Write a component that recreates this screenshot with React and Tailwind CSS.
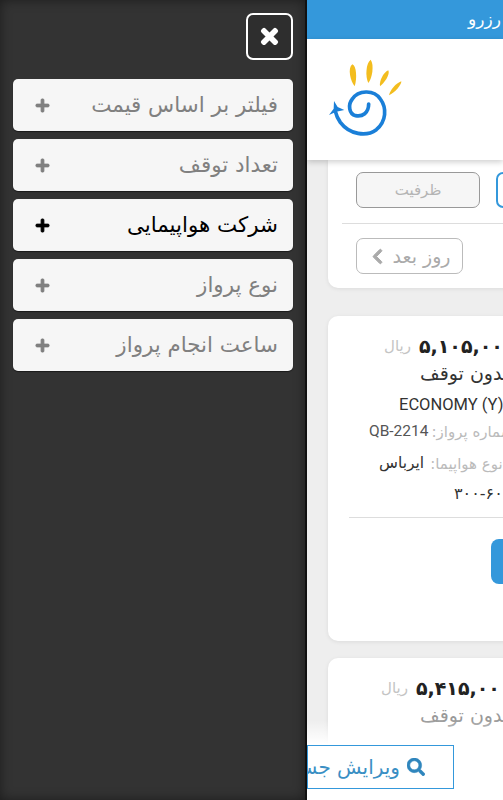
import React from "react";
import { FaTimes, FaPlus, FaSearch, FaChevronLeft } from "react-icons/fa";

const FILTERS = [
  ["فیلتر بر اساس قیمت", false],
  ["تعداد توقف", false],
  ["شرکت هواپیمایی", true],
  ["نوع پرواز", false],
  ["ساعت انجام پرواز", false],
];

const FONT = "font-['DejaVu_Sans','Noto_Sans',sans-serif]";

function Logo() {
  return (
    <svg viewBox="75 175 225 240" width="75" height="80" className="block">
      <g fill="#f3bd1e">
        <path d="M148 194C160 198 163 235 155 260C142 245 133 205 148 194Z" />
        <path d="M203 180C214 195 208 235 196 250C186 230 189 190 203 180Z" />
        <path d="M256 212C262 225 244 250 231 260C228 245 241 218 256 212Z" />
        <path d="M295 245C296 255 275 280 258 287C261 272 279 250 295 245Z" />
      </g>
      <path
        d="M197 313C197 340 178 352 158 348C138 343 134 315 148 298C165 272 212 268 232 298C252 325 250 365 220 390C190 412 140 405 112 368C105 358 100 348 97 335"
        fill="none"
        stroke="#1a7fd8"
        strokeWidth="11"
        strokeLinecap="round"
      />
      <path d="M78 346L92 327L93 304L104 322L124 331L100 336Z" fill="#1a7fd8" />
    </svg>
  );
}

function Card({ price, left, faded, tall }) {
  return (
    <div className={`w-[220px] rounded-l-[10px] bg-white shadow-[0_1px_4px_rgba(0,0,0,0.08)] ${tall ? "h-[325px]" : "h-[120px]"}`}>
      <div className="flex items-center pt-[16px]" style={{ paddingLeft: left }}>
        <span dir="rtl" className="text-[15px] leading-[28px] text-[#c4c4c4]">ریال</span>
        <span className="ml-[8px] whitespace-nowrap text-[19px] leading-[28px] font-bold tracking-[-0.6px] text-[#222]">۵,{price},۰۰۰</span>
      </div>
      <div className={`ml-[92px] h-[26px] whitespace-nowrap text-[19px] leading-[26px] ${faded ? "text-[#999]" : "text-[#333]"}`}>
        <span dir="rtl" className="inline-block">بدون توقف</span>
      </div>
      {tall && (
        <>
          <div className="ml-[71px] mt-[7px] whitespace-nowrap font-['Roboto',sans-serif] text-[16.5px] leading-[24px] text-[#333]">ECONOMY (Y)</div>
          <div className="ml-[41px] mt-[3px] flex h-[24px] items-center whitespace-nowrap">
            <span className="font-['Roboto',sans-serif] text-[15.5px] text-[#555]">QB-2214</span>
            <span dir="rtl" className="ml-[3px] text-[15px] text-[#bbb]">شماره پرواز:</span>
          </div>
          <div className="ml-[51px] mt-[8px] flex h-[24px] items-center whitespace-nowrap">
            <span dir="rtl" className="text-[15.5px] text-[#333]">ایرباس</span>
            <span dir="rtl" className="ml-[6px] text-[15px] text-[#bbb]">نوع هواپیما:</span>
          </div>
          <div className="ml-[126px] mt-[8px] whitespace-nowrap text-[16px] leading-[20px] text-[#333]">۳۰۰-۶۰۰</div>
          <div className="ml-[21px] mt-[13px] h-px bg-[#ddd]" />
          <div className="ml-[163px] mt-[21px] h-[45px] w-[60px] rounded-[8px] bg-[#3498db]" />
        </>
      )}
    </div>
  );
}

export default function App() {
  return (
    <div className={`relative flex h-[800px] w-[503px] overflow-hidden bg-[#eeeeee] ${FONT}`}>
      <aside className="flex h-full w-[307px] shrink-0 flex-col border-r-2 border-[#111] bg-[#333333] pt-[13px] pr-[12px] pl-[13px] shadow-[inset_0_0_12px_rgba(0,0,0,0.45)]">
        <div className="flex justify-end">
          <button className="flex h-[47px] w-[47px] items-center justify-center rounded-[7px] border-2 border-white bg-[#2e2e2e] text-white">
            <FaTimes size={23} stroke="currentColor" strokeWidth={30} />
          </button>
        </div>
        <div className="mt-[19px] flex flex-col gap-[8px]">
          {FILTERS.map(([label, active]) => (
            <div
              key={label}
              className={`flex h-[52px] items-center justify-between rounded-[5px] bg-[#f6f6f6] pr-[15px] pl-[22px] shadow-[0_1px_1px_rgba(0,0,0,0.5)] ${active ? "text-black" : "text-[#808080]"}`}
            >
              <FaPlus size={15} stroke="currentColor" strokeWidth={30} />
              <span dir="rtl" className="text-[21.4px] leading-[26px] whitespace-nowrap">{label}</span>
            </div>
          ))}
        </div>
      </aside>

      <main className="flex min-w-0 flex-1 flex-col overflow-hidden">
        <div className="flex h-[39px] shrink-0 items-center overflow-hidden bg-[#3498db] pl-[161px]">
          <span dir="rtl" className="shrink-0 whitespace-nowrap text-[17px] text-white">ه رزرو</span>
        </div>
        <div className="z-10 flex h-[121px] shrink-0 items-start bg-white pt-[19px] pl-[21px] shadow-[0_2px_6px_rgba(0,0,0,0.2)]">
          <Logo />
        </div>
        <div className="ml-[21px] flex flex-col">
          <div className="h-[128px] w-[220px] rounded-bl-[10px] bg-white px-[14px] pt-[12px] shadow-[0_1px_4px_rgba(0,0,0,0.08)]">
            <div className="ml-[14px] flex gap-[16px]">
              <div dir="rtl" className="flex h-[36px] w-[124px] shrink-0 items-center justify-center rounded-[7px] border border-[#999] bg-[#f6f6f6] text-[15px] text-[#b4b4b4]">ظرفیت</div>
              <div className="h-[36px] w-[60px] shrink-0 rounded-[7px] border-2 border-[#3498db] bg-white" />
            </div>
            <div className="mt-[15px] h-px bg-[#ddd]" />
            <div className="mt-[14px] ml-[14px] flex h-[36px] w-[107px] items-center justify-center gap-[7px] rounded-[7px] border border-[#bbb] text-[#aaa]">
              <FaChevronLeft size={17} stroke="currentColor" strokeWidth={30} />
              <span dir="rtl" className="text-[19px] whitespace-nowrap">روز بعد</span>
            </div>
          </div>
          <div className="mt-[28px]"><Card price="۱۰۵" left={56} tall /></div>
          <div className="mt-[17px]"><Card price="۴۱۵" left={53} faded /></div>
        </div>
      </main>

      <div className="absolute right-0 bottom-0 left-[307px] flex h-[80px] items-end bg-gradient-to-b from-transparent to-white to-[30%] pb-[11px]">
        <div className="flex h-[44px] w-[147px] items-center overflow-hidden border border-[#3498db] bg-white text-[#3a8fc4]">
          <div dir="rtl" className="flex w-[92px] shrink-0 justify-start overflow-hidden whitespace-nowrap text-[20px]">
            <span className="inline-block">ویرایش جستجو</span>
          </div>
          <FaSearch size={18} stroke="currentColor" strokeWidth={15} className="ml-[7px] shrink-0 text-[#2f86bd]" />
        </div>
      </div>
    </div>
  );
}
